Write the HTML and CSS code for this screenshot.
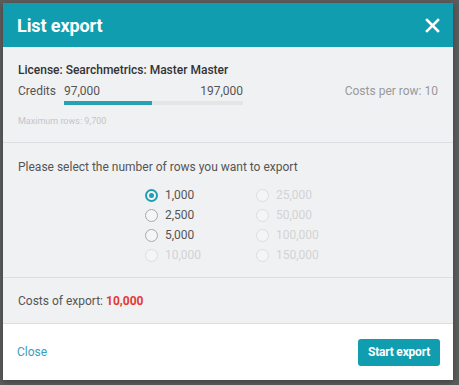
FILE: index.html
```html
<!DOCTYPE html>
<html lang="en">
<head>
    <meta charset="UTF-8">
    <meta name="viewport" content="width=device-width, initial-scale=1.0">
    <title>List export</title>
    <link rel="stylesheet" href="styles.css">
</head>
<body>

    <div class="overlay">
        <div class="modal">
            <!-- Header -->
            <div class="modal-header">
                <h2>List export</h2>
                <svg class="close-icon" width="15" height="15" viewBox="0 0 15 15">
                    <path d="M2 2 L13 13 M13 2 L2 13" stroke="#fff" stroke-width="2.6" stroke-linecap="square"/>
                </svg>
            </div>

            <!-- License section -->
            <div class="section license">
                <div class="license-name">License: Searchmetrics: Master Master</div>
                <div class="credits-row">
                    <span class="credits-label">Credits</span>
                    <div class="credits-box">
                        <div class="credits-values">
                            <span>97,000</span>
                            <span>197,000</span>
                        </div>
                        <div class="bar"><div class="bar-fill" style="width: 49%"></div></div>
                    </div>
                    <span class="cost-row">Costs per row: 10</span>
                </div>
                <div class="max-rows">Maximum rows: 9,700</div>
            </div>

            <!-- Rows section -->
            <div class="section rows">
                <div class="rows-title">Please select the number of rows you want to export</div>
                <div class="options">
                    <label class="option checked"><span class="radio"></span>1,000</label>
                    <label class="option"><span class="radio"></span>2,500</label>
                    <label class="option"><span class="radio"></span>5,000</label>
                    <label class="option disabled"><span class="radio"></span>10,000</label>
                    <label class="option disabled"><span class="radio"></span>25,000</label>
                    <label class="option disabled"><span class="radio"></span>50,000</label>
                    <label class="option disabled"><span class="radio"></span>100,000</label>
                    <label class="option disabled"><span class="radio"></span>150,000</label>
                </div>
            </div>

            <!-- Costs -->
            <div class="section costs">
                Costs of export: <span class="costs-value">10,000</span>
            </div>

            <!-- Footer -->
            <div class="modal-footer">
                <a class="close-link" href="#">Close</a>
                <button class="start-button">Start export</button>
            </div>
        </div>
    </div>

</body>
</html>
```

FILE: styles.css
```css
body {
    margin: 0;
    padding: 0;
    font-family: 'Roboto', 'Liberation Sans', sans-serif;
    background-color: #5c5c5c;
    width: 459px;
    height: 385px;
    overflow: hidden;
}

.overlay {
    padding: 3px 6px 0 3px;
}

.modal {
    width: 450px;
    background-color: #f0f1f3;
    box-shadow: 0 2px 6px rgba(0, 0, 0, 0.3);
}

.modal-header {
    height: 44px;
    background-color: #109db0;
    display: flex;
    align-items: center;
    justify-content: space-between;
    padding: 0 13px 0 14px;
}

.modal-header h2 {
    margin: 0;
    color: #fff;
    font-size: 18px;
    font-weight: 700;
    letter-spacing: -0.1px;
}

.close-icon {
    display: block;
}

.section {
    padding-left: 15px;
    padding-right: 15px;
    border-bottom: 1px solid #dcdde0;
    color: #555;
    font-size: 12px;
}

.license {
    height: 96px;
    padding-top: 14px;
    box-sizing: border-box;
}

.license-name {
    line-height: 18px;
    font-weight: 500;
    color: #333;
}

.credits-row {
    display: flex;
    align-items: flex-start;
    margin-top: 3px;
}

.credits-label {
    width: 46px;
    line-height: 18px;
}

.credits-box {
    width: 179px;
}

.credits-values {
    display: flex;
    justify-content: space-between;
    line-height: 18px;
    color: #555;
}

.bar {
    height: 4px;
    background-color: #e4e5e7;
    margin-top: 1px;
}

.bar-fill {
    height: 100%;
    background-color: #27a2b4;
}

.cost-row {
    margin-left: auto;
    line-height: 18px;
    color: #999;
}

.max-rows {
    margin-top: 11px;
    font-size: 9px;
    color: #c4c5c7;
}

.rows {
    height: 135px;
    box-sizing: border-box;
    padding-top: 16px;
}

.rows-title {
    line-height: 16px;
}

.options {
    display: grid;
    grid-template-rows: repeat(4, 20px);
    grid-auto-flow: column;
    grid-template-columns: 111px auto;
    margin-top: 10px;
    margin-left: 127px;
}

.option {
    display: flex;
    align-items: center;
    color: #555;
    font-size: 12px;
}

.radio {
    width: 11px;
    height: 11px;
    border: 1px solid #a8a9ab;
    border-radius: 50%;
    margin-right: 7px;
    box-sizing: content-box;
    position: relative;
    background-color: #f4f5f6;
}

.option.checked .radio {
    border: 2px solid #1ea0b2;
    width: 9px;
    height: 9px;
}

.option.checked .radio::after {
    content: '';
    position: absolute;
    left: 2px;
    top: 2px;
    width: 5px;
    height: 5px;
    border-radius: 50%;
    background-color: #1ea0b2;
}

.option.disabled {
    color: #d2d3d5;
}

.option.disabled .radio {
    border-color: #dcdde0;
}

.costs {
    height: 46px;
    box-sizing: border-box;
    display: flex;
    align-items: center;
    gap: 3px;
}

.costs-value {
    color: #e53935;
    font-weight: 700;
}

.modal-footer {
    height: 56px;
    background-color: #fff;
    display: flex;
    align-items: center;
    justify-content: space-between;
    padding: 0 13px 0 14px;
}

.close-link {
    color: #3a9ec0;
    font-size: 12px;
    text-decoration: none;
}

.start-button {
    width: 82px;
    height: 27px;
    border: none;
    border-radius: 3px;
    background-color: #109db0;
    color: #fff;
    font-family: 'Roboto', 'Liberation Sans', sans-serif;
    font-size: 12px;
    font-weight: 700;
    letter-spacing: -0.2px;
    padding: 0;
}
```
